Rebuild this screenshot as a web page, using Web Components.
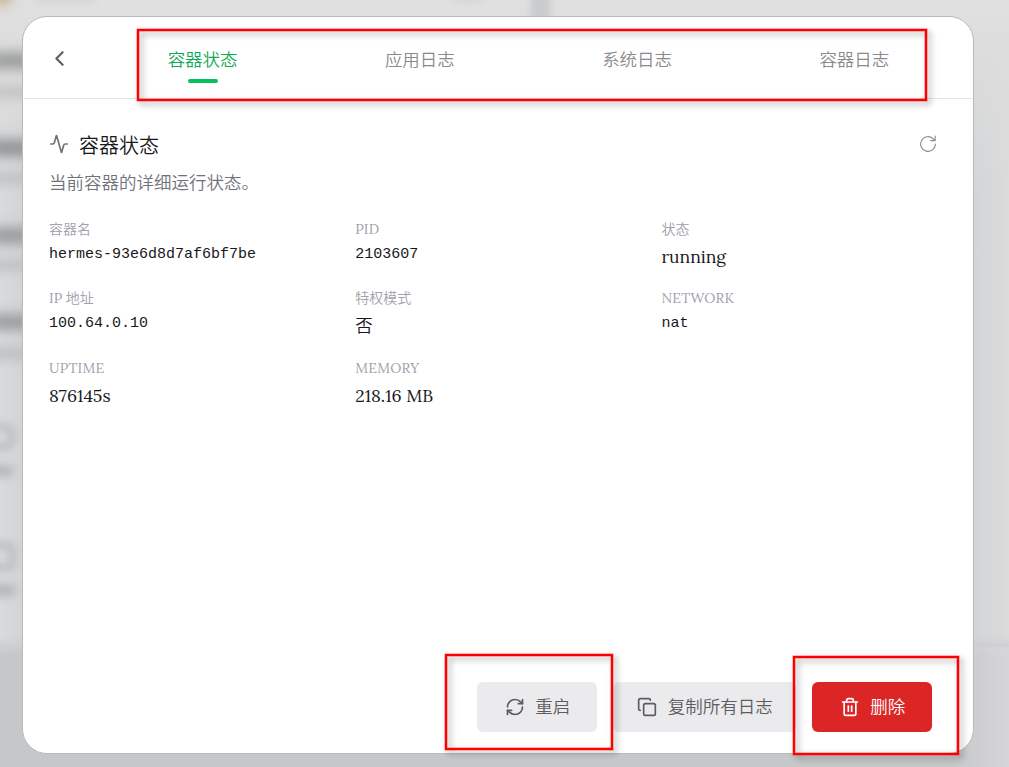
<!DOCTYPE html>
<html lang="zh-CN">
<head>
<meta charset="utf-8">
<title>容器状态</title>
<style>
  html, body {
    margin: 0;
    height: 100%;
    overflow: hidden;
  }
  body {
    font-family: Lora, "Noto Sans CJK SC", serif;
    font-weight: 350;
    color: #18181b;
  }
</style>
</head>
<body>
<container-page></container-page>

<script>
const ICONS = {
  back: '<path d="m15 18-6-6 6-6"/>',
  activity: '<path d="M22 12h-2.48a2 2 0 0 0-1.93 1.46l-2.35 8.36a.25.25 0 0 1-.48 0L9.24 2.18a.25.25 0 0 0-.48 0l-2.35 8.36A2 2 0 0 1 4.49 12H2"/>',
  reload: '<path d="M21.8 12a9.8 9.8 0 1 1-3-7L21.5 7"/><path d="M21.5 1.5v6H15.5"/>',
  restart: '<path d="M3 12a9 9 0 0 1 9-9 9.75 9.75 0 0 1 6.74 2.74L21 8"/><path d="M21 3v5h-5"/><path d="M21 12a9 9 0 0 1-9 9 9.75 9.75 0 0 1-6.74-2.74L3 16"/><path d="M8 16H3v5"/>',
  copy: '<rect x="8" y="8" width="14" height="14" rx="2"/><path d="M4 16c-1.1 0-2-.9-2-2V4c0-1.1.9-2 2-2h10c1.1 0 2 .9 2 2"/>',
  trash: '<path d="M3 6h18"/><path d="M19 6v14c0 1-1 2-2 2H7c-1 0-2-1-2-2V6"/><path d="M8 6V4c0-1 1-2 2-2h4c1 0 2 1 2 2v2"/><path d="M10 11v6"/><path d="M14 11v6"/>'
};

class LineIcon extends HTMLElement {
  constructor() {
    super();
    this.attachShadow({ mode: "open" });
  }

  connectedCallback() {
    const size = this.getAttribute("size") || 20;
    const stroke = this.getAttribute("stroke") || 2;
    this.shadowRoot.innerHTML = `
      <style>
        :host { display: inline-flex; flex: none; }
        svg { display: block; overflow: visible; }
      </style>
      <svg width="${size}" height="${size}" viewBox="0 0 24 24" fill="none" stroke="currentColor"
        stroke-width="${stroke}" stroke-linecap="round" stroke-linejoin="round">${ICONS[this.getAttribute("name")]}</svg>
    `;
  }
}
customElements.define("line-icon", LineIcon);

class TabItem extends HTMLElement {
  constructor() {
    super();
    this.attachShadow({ mode: "open" });
    this.shadowRoot.innerHTML = `
      <style>
        :host {
          display: flex;
          flex: 1;
          flex-direction: column;
          align-items: center;
          gap: 6px;
          padding-top: 30px;
          font-size: 17.5px;
          line-height: 26px;
          color: #8a8a8d;
        }
        :host([active]) { color: #10a855; }
        i {
          width: 30px;
          height: 4px;
          border-radius: 2px;
        }
        :host([active]) i { background: #07c160; }
      </style>
      <span><slot></slot></span><i></i>
    `;
  }
}
customElements.define("tab-item", TabItem);

class InfoField extends HTMLElement {
  constructor() {
    super();
    this.attachShadow({ mode: "open" });
    this.shadowRoot.innerHTML = `
      <style>
        :host { display: block; }
        .label {
          font-size: 14px;
          line-height: 19px;
          color: #a1a1aa;
        }
        .label ::slotted(:lang(en)) { letter-spacing: .2px; }
        .value {
          margin-top: 4px;
          font-size: 17.5px;
          line-height: 28px;
          white-space: nowrap;
        }
        :host([mono]) .value {
          margin-top: 6px;
          font-family: "Liberation Mono", monospace;
          font-size: 15px;
          line-height: 20px;
        }
      </style>
      <div class="label"><slot name="label"></slot></div>
      <div class="value"><slot></slot></div>
    `;
  }
}
customElements.define("info-field", InfoField);

class ActionButton extends HTMLElement {
  constructor() {
    super();
    this.attachShadow({ mode: "open" });
    this.shadowRoot.innerHTML = `
      <style>
        :host { display: block; }
        button {
          display: flex;
          align-items: center;
          justify-content: center;
          gap: 10.5px;
          box-sizing: border-box;
          width: var(--width, 120px);
          height: 50px;
          padding: 0 0 0 1px;
          border: 0;
          border-radius: 6px;
          background: #ebebed;
          color: #5d5d60;
          font: 350 17.5px/26px Lora, "Noto Sans CJK SC", serif;
          white-space: nowrap;
        }
        :host([danger]) button {
          background: #dc2626;
          color: #fff;
        }
      </style>
      <button><slot name="icon"></slot><span><slot></slot></span></button>
    `;
  }
}
customElements.define("action-button", ActionButton);

// Red outline drawn over a part of the page.
class MarkFrame extends HTMLElement {
  constructor() {
    super();
    this.attachShadow({ mode: "open" });
    this.shadowRoot.innerHTML = `
      <style>
        :host {
          position: absolute;
          box-sizing: border-box;
          border: 2px solid #f00;
          box-shadow: 0 0 0 .5px rgba(255, 0, 0, .5), inset 0 0 0 .5px rgba(255, 0, 0, .5);
          filter: drop-shadow(3.5px 3.5px 3px rgba(0, 0, 0, .36));
          pointer-events: none;
        }
      </style>
    `;
  }
}
customElements.define("mark-frame", MarkFrame);

class PageBackdrop extends HTMLElement {
  constructor() {
    super();
    this.attachShadow({ mode: "open" });
    this.shadowRoot.innerHTML = `
      <style>
        :host {
          position: absolute;
          inset: 0;
          overflow: hidden;
          background:
            linear-gradient(#c6c7c900 636px, #c6c7c9 656px),
            linear-gradient(90deg, #d9dadb, #d1d3d5 25px, #d1d3d5 970px, #dbdbdc 1009px);
        }
        .top {
          position: absolute;
          inset: 0 0 auto;
          height: 200px;
          background: linear-gradient(#e1e1e1, #dddddd 40px, #dddddd00);
        }
        .corner {
          position: absolute;
          right: 0;
          bottom: 0;
          width: 60px;
          height: 120px;
          background: linear-gradient(90deg, #d4d4d600, #d6d6d8);
        }
        b {
          position: absolute;
          box-sizing: border-box;
          filter: blur(6px);
        }
      </style>
      <div class="top"></div>
      <div class="corner"></div>
      <b style="left:-12px;top:-14px;width:26px;height:20px;background:#c9b795;border-radius:50%"></b>
      <b style="left:36px;top:-10px;width:58px;height:7px;background:#b4b4b4"></b>
      <b style="left:452px;top:-10px;width:30px;height:7px;background:#b3c3bb"></b>
      <b style="left:531px;top:-10px;width:19px;height:40px;background:#c8c9cb;filter:blur(4px)"></b>
      <b style="left:-10px;top:52px;width:44px;height:17px;background:#9c9d9e"></b>
      <b style="left:-10px;top:88px;width:44px;height:8px;background:#b8b9bb"></b>
      <b style="left:-10px;top:139px;width:44px;height:18px;background:#959698"></b>
      <b style="left:-10px;top:174px;width:44px;height:8px;background:#b5b6b8"></b>
      <b style="left:-10px;top:227px;width:44px;height:17px;background:#9b9c9e"></b>
      <b style="left:-10px;top:261px;width:44px;height:8px;background:#b6b7b9"></b>
      <b style="left:-10px;top:314px;width:44px;height:16px;background:#9b9c9e"></b>
      <b style="left:-10px;top:349px;width:44px;height:9px;background:#b5b6b8"></b>
      <b style="left:-12px;top:424px;width:27px;height:26px;border:5px solid #b2b3b5;border-radius:12px;filter:blur(4px)"></b>
      <b style="left:-12px;top:466px;width:25px;height:10px;background:#b1b2b4;filter:blur(5px)"></b>
      <b style="left:-12px;top:543px;width:27px;height:27px;border:5px solid #b2b3b5;border-radius:6px;filter:blur(4px)"></b>
      <b style="left:-12px;top:585px;width:27px;height:11px;background:#b1b2b4;filter:blur(5px)"></b>
    `;
  }
}
customElements.define("page-backdrop", PageBackdrop);

class ContainerDialog extends HTMLElement {
  constructor() {
    super();
    this.attachShadow({ mode: "open" });
    this.shadowRoot.innerHTML = `
      <style>
        :host {
          position: relative;
          display: flex;
          flex-direction: column;
          box-sizing: border-box;
          width: 952px;
          height: 738px;
          border: 1px solid #b8b9ba;
          border-radius: 25px;
          background: #fff;
        }
        header {
          display: flex;
          height: 81px;
          margin: 0 1px;
          padding-right: 9px;
          border-bottom: 1px solid #e4e4e7;
        }
        .back {
          display: flex;
          align-items: center;
          width: 47px;
          padding: 1px 0 0 23px;
          color: #5f5f62;
        }
        nav { display: flex; flex: 1; }
        main { flex: 1; padding: 29px 26px 0; }
        .title {
          display: flex;
          align-items: center;
          height: 32px;
          gap: 10px;
        }
        .title line-icon { color: #71717a; }
        .title h2 { flex: 1; margin: 0; font-size: 20px; font-weight: inherit; }
        .title .reload { margin-right: 10.5px; color: #8c8c90; }
        p {
          margin: 9.5px 0 24.5px;
          font-size: 17.5px;
          line-height: 26px;
          color: #71717a;
        }
        .grid {
          display: grid;
          grid-template-columns: repeat(3, 290px);
          grid-auto-rows: 52px;
          gap: 17.3px 16.25px;
        }
        footer {
          display: flex;
          justify-content: flex-end;
          gap: 16px;
          padding: 0 41px 21px;
        }
      </style>
      <header>
        <div class="back"><line-icon name="back" size="25" stroke="2.1"></line-icon></div>
        <nav><slot name="tab"></slot></nav>
      </header>
      <main>
        <div class="title">
          <line-icon name="activity" size="20"></line-icon>
          <h2>容器状态</h2>
          <line-icon class="reload" name="reload" size="18" stroke="1.5"></line-icon>
        </div>
        <p>当前容器的详细运行状态。</p>
        <div class="grid"><slot></slot></div>
      </main>
      <footer><slot name="action"></slot></footer>
    `;
  }
}
customElements.define("container-dialog", ContainerDialog);

class ContainerPage extends HTMLElement {
  constructor() {
    super();
    this.attachShadow({ mode: "open" });
    this.shadowRoot.innerHTML = `
      <style>
        :host {
          position: relative;
          display: block;
          box-sizing: border-box;
          width: 1009px;
          height: 767px;
          padding: 16px 0 0 22px;
          overflow: hidden;
        }
        .tabs { left: 137px; top: 29px; width: 790px; height: 72px; }
        .restart { left: 445px; top: 654px; width: 168px; height: 96px; }
        .delete { left: 793px; top: 656px; width: 166px; height: 99px; }
      </style>
      <page-backdrop></page-backdrop>
      <container-dialog>
        <tab-item slot="tab" active>容器状态</tab-item>
        <tab-item slot="tab">应用日志</tab-item>
        <tab-item slot="tab">系统日志</tab-item>
        <tab-item slot="tab">容器日志</tab-item>

        <info-field mono><span slot="label">容器名</span>hermes-93e6d8d7af6bf7be</info-field>
        <info-field mono><span slot="label" lang="en">PID</span>2103607</info-field>
        <info-field><span slot="label">状态</span>running</info-field>
        <info-field mono><span slot="label">IP 地址</span>100.64.0.10</info-field>
        <info-field><span slot="label">特权模式</span>否</info-field>
        <info-field mono><span slot="label" lang="en">NETWORK</span>nat</info-field>
        <info-field><span slot="label" lang="en">UPTIME</span>876145s</info-field>
        <info-field><span slot="label" lang="en">MEMORY</span>218.16 MB</info-field>

        <action-button slot="action"><line-icon slot="icon" name="restart" size="20"></line-icon>重启</action-button>
        <action-button slot="action" style="--width:183px"><line-icon slot="icon" name="copy" size="20"></line-icon>复制所有日志</action-button>
        <action-button slot="action" danger><line-icon slot="icon" name="trash" size="20"></line-icon>删除</action-button>
      </container-dialog>
      <mark-frame class="tabs"></mark-frame>
      <mark-frame class="restart"></mark-frame>
      <mark-frame class="delete"></mark-frame>
    `;
  }
}
customElements.define("container-page", ContainerPage);
</script>
</body>
</html>
